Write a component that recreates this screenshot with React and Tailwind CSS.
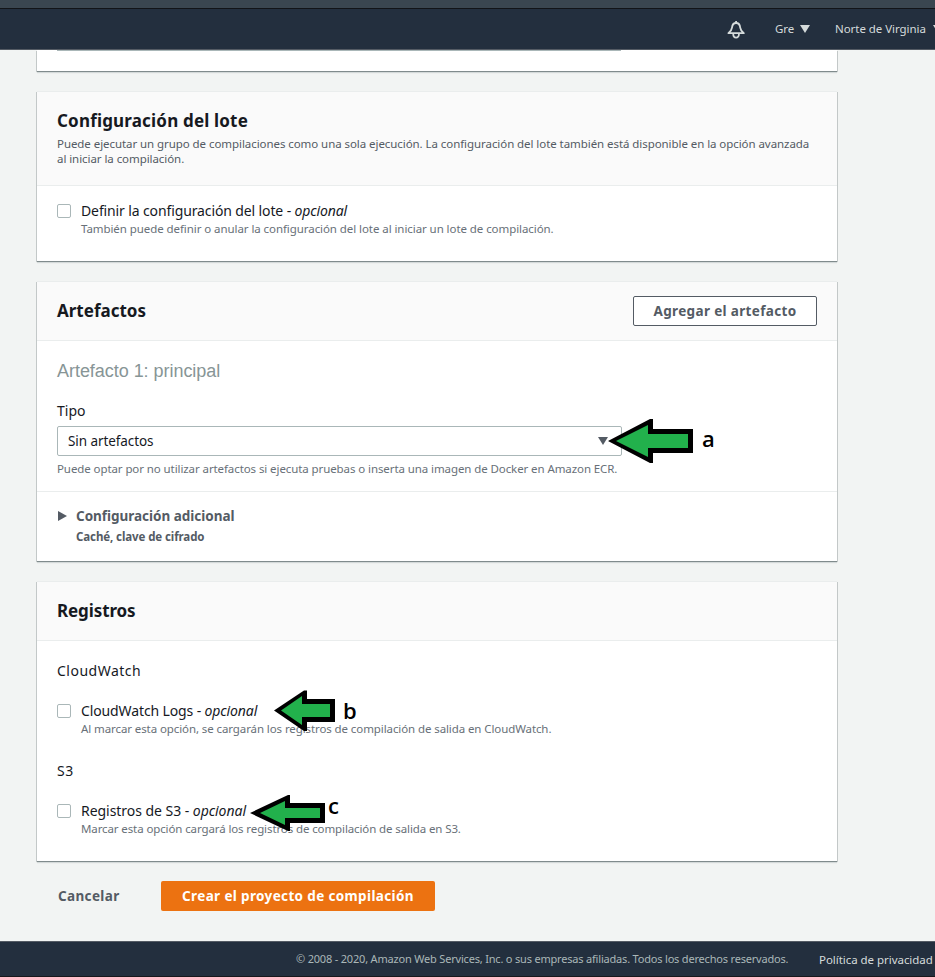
import React from "react";

const SHADOW =
  "shadow-[0_1px_0_0_#808b8c,1px_1px_0_0_#c3c8c8,-1px_1px_0_0_#c3c8c8,0_2px_1px_0_rgba(0,28,36,0.12)]";

function Panel({ className, children }) {
  return (
    <section className={`w-[800px] border-t border-[#eaeded] bg-white ${SHADOW} ${className}`}>
      {children}
    </section>
  );
}

function Checkbox() {
  return <span className="mt-[3px] h-[14px] w-[14px] shrink-0 rounded-[2px] border border-[#aab7b8] bg-white" />;
}

function Arrow({ className, width, height, outer, inner }) {
  return (
    <svg className={`absolute ${className}`} width={width} height={height} viewBox={`0 0 ${width} ${height}`}>
      <polygon points={outer} fill="#000" />
      <polygon points={inner} fill="#22b14c" />
    </svg>
  );
}

function Caret({ className }) {
  return (
    <svg className={className} width="10" height="8" viewBox="0 0 10 8">
      <path d="M0 0h10L5 8z" fill="currentColor" />
    </svg>
  );
}

export default function App() {
  return (
    <div className="flex h-[977px] w-[935px] flex-col overflow-hidden whitespace-nowrap bg-[#f2f4f3] font-['Noto_Sans','Open_Sans',sans-serif] text-[#16191f]">
      <div className="h-[9px] shrink-0 border-b border-[#121418] bg-[#3a4650]" />
      <header className="flex h-[41px] shrink-0 items-center border-b border-[#545b64] bg-[#232f3e] text-[11.5px] text-[#d5dbdb]">
        <svg className="ml-[727px] mt-[2px] shrink-0" width="18" height="18" viewBox="0 0 18 18" fill="none" stroke="currentColor" strokeWidth="1.8" strokeLinejoin="round">
          <path d="M1.4 12.2h15.4C14.6 10.4 13.5 9.2 13.2 6.6 12.9 3.6 11.6 2 9.1 2S5.3 3.6 5 6.6C4.7 9.2 3.6 10.4 1.4 12.2z" />
          <path d="M9.1 0v2M6.2 12.5c0 5.6 5.8 5.6 5.8 0" />
        </svg>
        <span className="ml-[30px] w-[18px] tracking-[-0.1px]">Gre</span>
        <Caret className="ml-[7px] shrink-0" />
        <span className="ml-[25px] w-[91px] shrink-0 tracking-[-0.05px]">Norte de Virginia</span>
        <Caret className="ml-[7px] shrink-0" />
      </header>

      <main className="flex h-[891px] shrink-0 flex-col pl-[37px]">
        <div className={`h-[21px] w-[800px] shrink-0 bg-white pl-[20px] ${SHADOW}`}>
          <div className="h-px w-[564px] bg-[#aab7b8]" />
        </div>

        <Panel className="mt-[20px] h-[170px] shrink-0">
          <div className="h-[94px] border-b border-[#eaeded] bg-[#fafafa] px-[20px] pt-[17px]">
            <h2 className="text-[17px] leading-[24px] font-bold tracking-[0.18px]">Configuración del lote</h2>
            <p className="mt-[3px] text-[11.5px] leading-[15px] tracking-[-0.065px] text-[#545b64]">
              Puede ejecutar un grupo de compilaciones como una sola ejecución. La configuración del lote también está disponible en la opción avanzada
              <br />
              al iniciar la compilación.
            </p>
          </div>
          <div className="flex gap-[10px] px-[20px] pt-[15px]">
            <Checkbox />
            <div>
              <div className="text-[14px] leading-[20px] tracking-[-0.12px]">Definir la configuración del lote - <i>opcional</i></div>
              <div className="text-[11.5px] leading-[16px] tracking-[-0.07px] text-[#687078]">También puede definir o anular la configuración del lote al iniciar un lote de compilación.</div>
            </div>
          </div>
        </Panel>

        <Panel className="mt-[20px] h-[280px] shrink-0">
          <div className="flex h-[59px] items-center justify-between border-b border-[#eaeded] bg-[#fafafa] px-[20px]">
            <h2 className="text-[17px] leading-[24px] font-bold">Artefactos</h2>
            <button className="h-[30px] w-[184px] rounded-[2px] border border-[#545b64] bg-white text-[13.5px] font-bold tracking-[0.34px] text-[#545b64]">Agregar el artefacto</button>
          </div>
          <div className="h-[151px] border-b border-[#eaeded] px-[20px] pt-[19px]">
            <h3 className="font-['Liberation_Sans',sans-serif] text-[18px] leading-[22px] tracking-[-0.04px] text-[#879596]">Artefacto 1: principal</h3>
            <div className="mt-[19px] text-[14px] leading-[20px]">Tipo</div>
            <div className="relative mt-[5px] flex h-[30px] w-[565px] items-center justify-between rounded-[2px] border border-[#aab7b8] bg-white pr-[13px] pl-[10px]">
              <span className="text-[13.5px] tracking-[-0.08px]">Sin artefactos</span>
              <Caret className="text-[#545b64]" />
              <Arrow
                className="left-[548px] top-[-10px]"
                width={90}
                height={48}
                outer="2,24 44,2 47,2 47,12 87,12 87,36 47,36 47,46 44,46"
                inner="10,24 42,8 42,17 82,17 82,31 42,31 42,40"
              />
              <span className="absolute left-[644px] top-[-1px] font-['Open_Sans',sans-serif] text-[22px] leading-[24px] font-semibold text-black">a</span>
            </div>
            <div className="mt-[5px] text-[11.5px] leading-[16px] tracking-[-0.09px] text-[#687078]">Puede optar por no utilizar artefactos si ejecuta pruebas o inserta una imagen de Docker en Amazon ECR.</div>
          </div>
          <div className="flex gap-[9px] px-[20px] pt-[14px] text-[#545b64]">
            <svg className="mt-[5px] ml-px" width="9" height="10" viewBox="0 0 9 10"><path d="M0 0v10l9-5z" fill="currentColor" /></svg>
            <div>
              <div className="text-[13.5px] leading-[20px] font-bold tracking-[-0.02px]">Configuración adicional</div>
              <div className="mt-[3px] text-[11.5px] leading-[16px] font-bold tracking-[-0.1px]">Caché, clave de cifrado</div>
            </div>
          </div>
        </Panel>

        <Panel className="mt-[20px] h-[280px] shrink-0">
          <div className="flex h-[59px] items-center border-b border-[#eaeded] bg-[#fafafa] px-[20px]">
            <h2 className="text-[17px] leading-[24px] font-bold tracking-[-0.1px]">Registros</h2>
          </div>
          <div className="px-[20px] pt-[20px]">
            <div className="text-[14px] leading-[20px] tracking-[0.5px]">CloudWatch</div>
            <div className="relative mt-[20px] flex gap-[10px]">
              <Checkbox />
              <div>
                <div className="text-[14px] leading-[20px] tracking-[-0.12px]">CloudWatch Logs - <i>opcional</i></div>
                <div className="text-[11.5px] leading-[16px] tracking-[-0.095px] text-[#687078]">Al marcar esta opción, se cargarán los registros de compilación de salida en CloudWatch.</div>
              </div>
              <Arrow
                className="left-[214px] top-[-13px]"
                width={70}
                height={46}
                outer="3,22.5 33,2.5 36,2.5 36,11 64,11 64,34 36,34 36,43 33,43"
                inner="10,22.5 31,8 31,16 59,16 59,29 31,29 31,37"
              />
              <span className="absolute left-[286px] top-[-3px] font-['Open_Sans',sans-serif] text-[22px] leading-[24px] font-semibold text-black">b</span>
            </div>
            <div className="mt-[24px] text-[14px] leading-[20px] tracking-[0.5px]">S3</div>
            <div className="relative mt-[20px] flex gap-[10px]">
              <Checkbox />
              <div>
                <div className="text-[14px] leading-[20px] tracking-[-0.04px]">Registros de S3 - <i>opcional</i></div>
                <div className="text-[11.5px] leading-[16px] tracking-[-0.11px] text-[#687078]">Marcar esta opción cargará los registros de compilación de salida en S3.</div>
              </div>
              <Arrow
                className="left-[190px] top-[-10px]"
                width={84}
                height={44}
                outer="3,22 41,4 43,4 43,12 78,12 78,32 43,32 43,40 41,40"
                inner="13,22 38,10 38,17 73,17 73,27 38,27 38,34"
              />
              <span className="absolute left-[271px] top-[-8px] font-['Open_Sans',sans-serif] text-[22px] leading-[24px] font-semibold text-black">c</span>
            </div>
          </div>
        </Panel>

        <div className="mt-[20px] flex h-[30px] items-center pl-[21px] text-[13.5px] font-bold tracking-[0.36px]">
          <button className="w-[62px] text-left text-[#545b64]">Cancelar</button>
          <button className="ml-[41px] h-[30px] w-[274px] rounded-[2px] bg-[#ec7211] text-white">Crear el proyecto de compilación</button>
        </div>
      </main>

      <footer className="flex h-[36px] shrink-0 items-center border-t border-b border-t-[#545b64] border-b-[#17171c] bg-[#232f3e] pt-px pl-[296px] text-[#aab7b8]">
        <span className="w-[493px] shrink-0 text-[11px] tracking-[-0.19px]">© 2008 - 2020, Amazon Web Services, Inc. o sus empresas afiliadas. Todos los derechos reservados.</span>
        <span className="ml-[30px] text-[11.5px] tracking-[-0.04px] text-[#d5dbdb]">Política de privacidad</span>
      </footer>
    </div>
  );
}
